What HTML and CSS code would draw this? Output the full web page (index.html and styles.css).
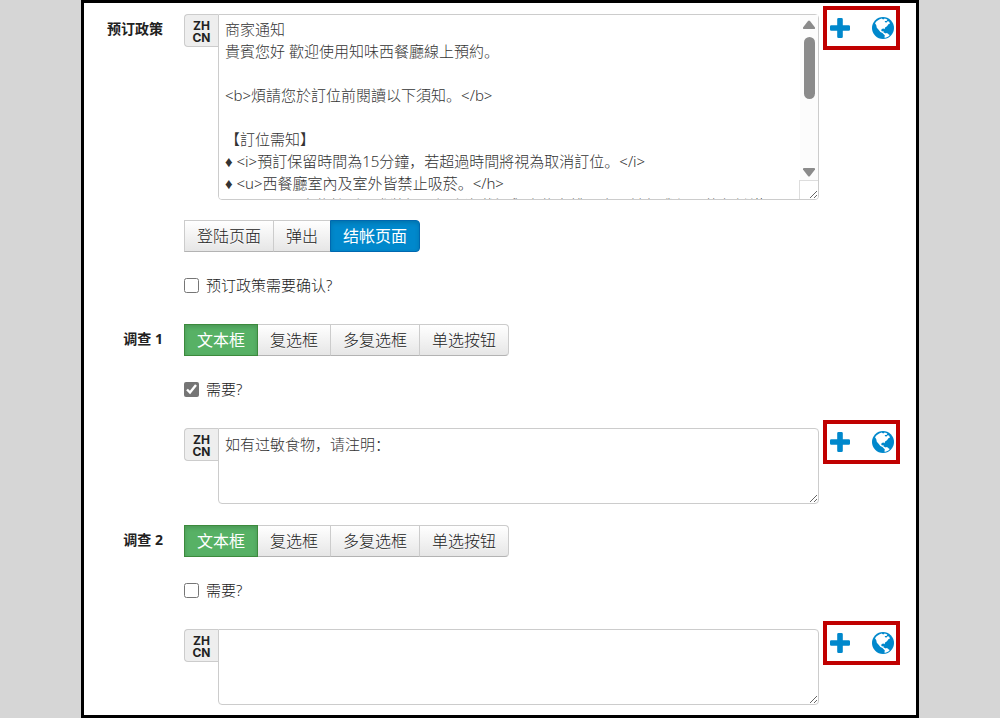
FILE: index.html
```
<!DOCTYPE html>
<html lang="zh-CN">
<head>
  <meta charset="UTF-8">
  <meta name="viewport" content="width=device-width, initial-scale=1.0">
  <title>预订政策</title>
  <link rel="stylesheet" href="styles.css">
</head>
<body>
  <!-- shared icons -->
  <svg class="sprite" aria-hidden="true">
    <symbol id="icon-plus" viewBox="0 0 20 20">
      <path d="M8.500 0h3a1.300 1.300 0 0 1 1.300 1.300v5.900h5.900A1.300 1.300 0 0 1 20 8.500v3a1.300 1.300 0 0 1-1.300 1.300h-5.900v5.900a1.300 1.300 0 0 1-1.300 1.300h-3a1.300 1.300 0 0 1-1.300-1.300v-5.900H1.300A1.300 1.300 0 0 1 0 11.500v-3a1.300 1.300 0 0 1 1.300-1.300h5.900V1.300A1.300 1.300 0 0 1 8.500 0z"/>
    </symbol>
    <symbol id="icon-globe" viewBox="0 0 22 22">
      <circle cx="11" cy="11" r="11"/>
      <path class="land" d="M3 6.200L4.600 4.200 7.200 2.400 9.600 1.600l1.600.8 1.600-.8 2.600 1-.8 1.400-1.800 0 .2 1.200 1.600.2 1-1.200 1.400.4 1 1.800-1.600.9-1.400 1.900-1.900 1.300-.6 1.700-1-.7-1.800.5-.5 1.500.9 1 1.300-.4.2 1.300 1.300.5.4 1.400 1.400.6-.8.5-2-.9-1.400-1.600-2.100-1-1.800-2.200L4.800 10.800 4.200 8z"/>
      <path class="land" d="M12.400 17.200l1.500-1.200 2 .4.800 1.100 1.100.5-1.400 1.500-2.800 1.200-1.300-.2.500-1.700z"/>
    </symbol>
  </svg>

  <form class="frame">
    <div class="row">
      <label class="row-label" for="policy">预订政策</label>
      <div class="row-body">
        <div class="field">
          <span class="lang">ZH<br>CN</span>
          <div class="tall-wrap">
            <textarea id="policy" class="text tall">商家通知
貴賓您好 歡迎使用知味西餐廳線上預約。

&lt;b&gt;煩請您於訂位前閱讀以下須知。&lt;/b&gt;

【訂位需知】
♦ &lt;i&gt;預訂保留時間為15分鐘，若超過時間將視為取消訂位。&lt;/i&gt;
♦ &lt;u&gt;西餐廳室內及室外皆禁止吸菸。&lt;/h&gt;
　　　　　座位特別需求將視現場人潮狀況與座位安排而定，請恕我們不能保證滿






</textarea>
            <div class="scrollbar" aria-hidden="true">
              <svg class="arrow" viewBox="0 0 12 9"><path d="M5 1a1.300 1.300 0 0 1 2 0l5 6.500q.3 1.500-1 1.500H1Q-.3 9 0 7.500z"/></svg>
              <div class="track"><div class="thumb"></div></div>
              <svg class="arrow" viewBox="0 0 12 9"><path d="M5 8a1.300 1.300 0 0 0 2 0l5-6.500Q12.300 0 11 0H1Q-.3 0 0 1.500z"/></svg>
            </div>
            <div class="corner" aria-hidden="true"></div>
          </div>
          <div class="actions">
            <button type="button" aria-label="添加"><svg class="icon plus"><use href="#icon-plus"/></svg></button>
            <button type="button" aria-label="语言"><svg class="icon globe"><use href="#icon-globe"/></svg></button>
          </div>
        </div>
        <div class="btn-group policy-group">
          <button type="button" class="btn">登陆页面</button>
          <button type="button" class="btn">弹出</button>
          <button type="button" class="btn btn-primary">结帐页面</button>
        </div>
        <label class="check"><input type="checkbox"> 预订政策需要确认?</label>
      </div>
    </div>

    <div class="row">
      <label class="row-label" for="survey1">调查 1</label>
      <div class="row-body">
        <div class="btn-group">
          <button type="button" class="btn btn-success">文本框</button>
          <button type="button" class="btn">复选框</button>
          <button type="button" class="btn">多复选框</button>
          <button type="button" class="btn">单选按钮</button>
        </div>
        <label class="check"><input type="checkbox" checked> 需要?</label>
        <div class="field">
          <span class="lang">ZH<br>CN</span>
          <textarea id="survey1" class="text">如有过敏食物，请注明：</textarea>
          <div class="actions">
            <button type="button" aria-label="添加"><svg class="icon plus"><use href="#icon-plus"/></svg></button>
            <button type="button" aria-label="语言"><svg class="icon globe"><use href="#icon-globe"/></svg></button>
          </div>
        </div>
      </div>
    </div>

    <div class="row">
      <label class="row-label" for="survey2">调查 2</label>
      <div class="row-body">
        <div class="btn-group">
          <button type="button" class="btn btn-success">文本框</button>
          <button type="button" class="btn">复选框</button>
          <button type="button" class="btn">多复选框</button>
          <button type="button" class="btn">单选按钮</button>
        </div>
        <label class="check"><input type="checkbox"> 需要?</label>
        <div class="field">
          <span class="lang">ZH<br>CN</span>
          <textarea id="survey2" class="text"></textarea>
          <div class="actions">
            <button type="button" aria-label="添加"><svg class="icon plus"><use href="#icon-plus"/></svg></button>
            <button type="button" aria-label="语言"><svg class="icon globe"><use href="#icon-globe"/></svg></button>
          </div>
        </div>
      </div>
    </div>
  </form>
</body>
</html>
```
FILE: styles.css
```
* {
  box-sizing: border-box;
}
body {
  margin: 0;
  padding: 0 81px;
  background: #d6d6d6;
  color: #222;
  font-family: "Noto Sans", "Noto Sans CJK SC", sans-serif;
  font-size: 15px;
  font-weight: 300;
  line-height: 22px;
}
.sprite {
  display: none;
}
.frame {
  min-height: 100vh;
  padding: 11px 16px 9px 0;
  border: 3px solid #000;
  background: #fff;
}
.row {
  display: grid;
  grid-template-columns: 79px 1fr;
  column-gap: 21px;
}
.row + .row {
  margin-top: 28px;
}
.row:last-child {
  margin-top: 21px;
}
.row-label {
  text-align: right;
  font-size: 14px;
  font-weight: bold;
  line-height: 30px;
}

/* text areas */
.field {
  display: flex;
  align-items: flex-start;
}
.lang {
  width: 34px;
  height: 33px;
  padding-top: 5px;
  border: 1px solid #ccc;
  border-right: none;
  border-radius: 4px 0 0 4px;
  background: #eee;
  font: bold 12px/12px Inter, "Liberation Sans", sans-serif;
  text-align: center;
}
.text {
  flex: 1;
  min-width: 0;
  height: 76px;
  padding: 4px 6px;
  border: 1px solid #ccc;
  border-radius: 0 4px 4px 4px;
  background: #fff;
  color: #333;
  font-family: "Noto Sans", "Noto Sans CJK SC", sans-serif;
  font-size: 15px;
  font-weight: 300;
  line-height: 22px;
}
.tall-wrap {
  position: relative;
  display: flex;
  flex: 1;
}
.tall {
  height: 186px;
  padding: 3px 24px 3px 6px;
  font-family: "Noto Sans", "Liberation Sans", "Noto Sans CJK TC", sans-serif;
  scrollbar-width: none;
}
.scrollbar {
  position: absolute;
  top: 1px;
  right: 1px;
  bottom: 19px;
  display: flex;
  flex-direction: column;
  align-items: center;
  width: 18px;
  padding: 5px 0 4px;
  background: #fcfcfc;
  pointer-events: none;
}
.arrow {
  width: 12px;
  height: 9px;
  fill: #8b8b8b;
}
.track {
  flex: 1;
  padding: 8px 0;
}
.thumb {
  width: 11px;
  height: 50%;
  border-radius: 6px;
  background: #8b8b8b;
}
.corner {
  position: absolute;
  right: 1px;
  bottom: 1px;
  width: 19px;
  height: 19px;
  border-top: 1px solid #ddd;
  border-left: 1px solid #ddd;
  pointer-events: none;
}

/* plus / globe links in the red box */
.actions {
  display: flex;
  align-items: center;
  justify-content: space-between;
  width: 77px;
  height: 44px;
  margin: -8px 0 0 4px;
  padding: 0 2px 0 3px;
  border: 4px solid #c00000;
}
.actions button {
  display: flex;
  padding: 0;
  border: none;
  background: none;
  cursor: pointer;
}
.icon {
  fill: #0088cc;
}
.plus {
  width: 20px;
  height: 20px;
}
.globe {
  width: 22px;
  height: 22px;
}
.land {
  fill: #fff;
}

/* button groups */
.btn-group {
  display: flex;
}
.policy-group {
  margin-top: 20px;
}
.btn {
  height: 32px;
  padding: 0 12px;
  border: 1px solid #ccc;
  border-bottom-color: #b3b3b3;
  background: linear-gradient(#fff, #e6e6e6);
  color: #222;
  font-family: "Noto Sans", "Noto Sans CJK SC", sans-serif;
  font-size: 16px;
  font-weight: 300;
  line-height: 22px;
  text-shadow: 0 1px 1px rgba(255,255,255,0.75);
  cursor: pointer;
}
.btn + .btn {
  margin-left: -1px;
}
.btn:last-child {
  border-radius: 0 4px 4px 0;
}
.btn-primary {
  border-color: #0068b0;
  background: #0088cc;
  color: #fff;
  font-weight: 400;
  box-shadow: inset 0 2px 4px rgba(0,0,0,0.15);
  text-shadow: none;
}
.btn-success {
  position: relative;
  border-color: #3c8a3c;
  background: #57b165;
  color: #fff;
  font-weight: 400;
  box-shadow: inset 0 2px 4px rgba(0,0,0,0.15);
  text-shadow: none;
}

.check {
  display: flex;
  align-items: center;
  gap: 7px;
  width: fit-content;
  margin-top: 22px;
}
.check input {
  width: 15px;
  height: 15px;
  margin: 0;
  accent-color: #757575;
}
.check + .field {
  margin-top: 28px;
}
```
